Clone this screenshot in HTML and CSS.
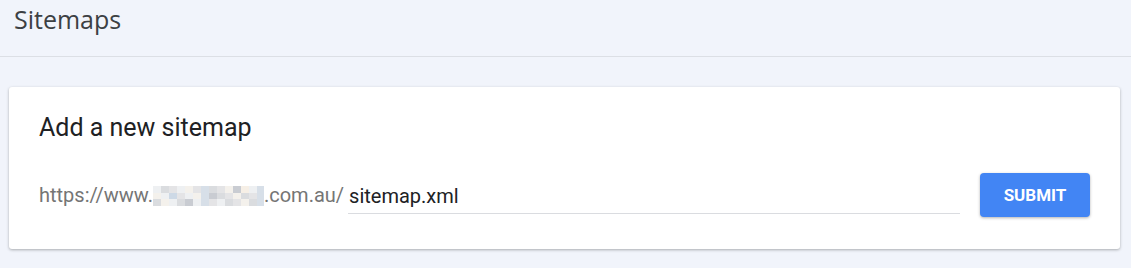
FILE: index.html
```html
<html>
    <head>
        <meta charset="UTF-8">
        <link rel="stylesheet" href="styles.css">
    </head>
    <body>
        <div class="header">
            <span class="page-title">Sitemaps</span>
        </div>

        <div class="content">
            <div class="card">
                <div class="card-title">Add a new sitemap</div>
                <div class="add-row">
                    <span class="prefix">https://www.<span class="blur"><i></i><i></i><i></i><i></i><i></i><i></i><i></i><i></i><i></i><i></i><i></i><i></i><i></i><i></i><i></i><i></i><i></i><i></i><i></i><i></i><i></i><i></i><i></i><i></i><i></i><i></i><i></i><i></i><i></i><i></i><i></i><i></i><i></i><i></i><i></i><i></i><i></i><i></i><i></i><i></i><i></i><i></i></span>.com.au/</span>
                    <div class="field">
                        <input class="sitemap-input" type="text" value="sitemap.xml">
                    </div>
                    <button class="submit">SUBMIT</button>
                </div>
            </div>
        </div>
    </body>
</html>
```

FILE: styles.css
```css
html, body {
    margin: 0px;
    background: #f1f4fb;
    font-family: Roboto, "Liberation Sans", sans-serif;
}

.header {
    height: 57px;
    border-bottom: 1px solid #dcdfe5;
    padding-left: 14px;
    box-sizing: border-box;
}
.page-title {
    display: inline-block;
    margin-top: 2px;
    font-family: "Open Sans", Roboto, sans-serif;
    font-size: 25px;
    color: #3c4043;
}

.content {
    padding: 30px 11px 0 9px;
}

.card {
    background: white;
    height: 162px;
    box-sizing: border-box;
    border-radius: 3px;
    box-shadow: 0 1px 3px rgba(0,0,0,0.3);
    padding: 26px 30px 0 30px;
}
.card-title {
    font-size: 25px;
    color: #202124;
    line-height: 30px;
}

.add-row {
    display: flex;
    align-items: center;
    margin-top: 30px;
}

.prefix {
    font-size: 20px;
    color: #757575;
    white-space: nowrap;
    display: flex;
    align-items: center;
}

.blur {
    display: inline-grid;
    grid-template-columns: repeat(14, 8px);
    grid-auto-rows: 6.5px;
    width: 111px;
    overflow: hidden;
    margin-top: 2px;
}
.blur i:nth-child(3n)   { background: #e4e4e6; }
.blur i:nth-child(3n+1) { background: #eef0f2; }
.blur i:nth-child(3n+2) { background: #dadcdf; }
.blur i:nth-child(5n)   { background: #f4f1ec; }
.blur i:nth-child(7n)   { background: #d7dfe8; }
.blur i:nth-child(11n)  { background: #c9ccd2; }
.blur i:nth-child(17)   { background: #cdd9e6; }
.blur i:nth-child(12)   { background: #f6efe6; }

.field {
    flex: 1;
    margin-left: 4px;
    border-bottom: 1px solid #dadce0;
}
.sitemap-input {
    border: none;
    outline: none;
    width: 100%;
    font-family: Roboto, sans-serif;
    font-size: 20px;
    color: #202124;
    padding: 7px 0 5px 1px;
    background: transparent;
}

.submit {
    margin-left: 20px;
    width: 110px;
    height: 44px;
    background: #4285f4;
    color: white;
    border: none;
    border-radius: 4px;
    font-family: Roboto, sans-serif;
    font-weight: bold;
    font-size: 17px;
    box-shadow: 0 1px 3px rgba(0,0,0,0.3);
}
```
